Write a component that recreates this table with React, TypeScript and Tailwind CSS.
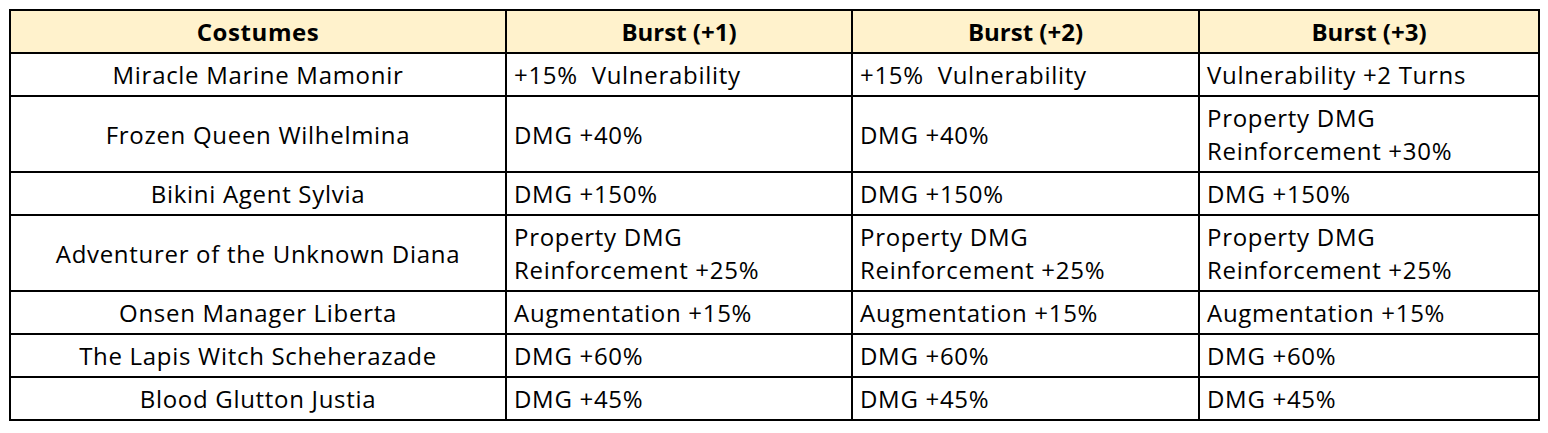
const rows: { name: string; b1: string[]; b2: string[]; b3: string[] }[] = [
  { name: "Miracle Marine Mamonir", b1: ["+15%\u00a0 Vulnerability"], b2: ["+15%\u00a0 Vulnerability"], b3: ["Vulnerability +2 Turns"] },
  { name: "Frozen Queen Wilhelmina", b1: ["DMG +40%"], b2: ["DMG +40%"], b3: ["Property DMG", "Reinforcement +30%"] },
  { name: "Bikini Agent Sylvia", b1: ["DMG +150%"], b2: ["DMG +150%"], b3: ["DMG +150%"] },
  { name: "Adventurer of the Unknown Diana", b1: ["Property DMG", "Reinforcement +25%"], b2: ["Property DMG", "Reinforcement +25%"], b3: ["Property DMG", "Reinforcement +25%"] },
  { name: "Onsen Manager Liberta", b1: ["Augmentation +15%"], b2: ["Augmentation +15%"], b3: ["Augmentation +15%"] },
  { name: "The Lapis Witch Scheherazade", b1: ["DMG +60%"], b2: ["DMG +60%"], b3: ["DMG +60%"] },
  { name: "Blood Glutton Justia", b1: ["DMG +45%"], b2: ["DMG +45%"], b3: ["DMG +45%"] },
];

const cell = "border-2 border-black px-[7px] py-1 align-middle";

function Lines({ lines }: { lines: string[] }) {
  return (
    <>
      {lines.map((l) => (
        <div key={l} className="whitespace-nowrap">{l}</div>
      ))}
    </>
  );
}

export default function App() {
  return (
    <div className="min-h-screen bg-white pl-[9px] pt-[9px] font-['Open_Sans',sans-serif] text-[24px] leading-[33px] tracking-[0.7px] text-black">
      <table className="w-[1529px] table-fixed border-collapse border-2 border-black">
        <colgroup>
          <col className="w-[496px]" />
          <col className="w-[346px]" />
          <col className="w-[347px]" />
          <col className="w-[340px]" />
        </colgroup>
        <thead>
          <tr className="bg-[#fff2cc]">
            <th className={`${cell} text-center font-bold tracking-[0.6px]`}>Costumes</th>
            <th className={`${cell} text-center font-bold tracking-normal`}>Burst (+1)</th>
            <th className={`${cell} text-center font-bold tracking-normal`}>Burst (+2)</th>
            <th className={`${cell} text-center font-bold tracking-normal`}>Burst (+3)</th>
          </tr>
        </thead>
        <tbody>
          {rows.map((r) => (
            <tr key={r.name}>
              <td className={`${cell} text-center`}>{r.name}</td>
              <td className={`${cell} text-left`}><Lines lines={r.b1} /></td>
              <td className={`${cell} text-left`}><Lines lines={r.b2} /></td>
              <td className={`${cell} text-left`}><Lines lines={r.b3} /></td>
            </tr>
          ))}
        </tbody>
      </table>
    </div>
  );
}
